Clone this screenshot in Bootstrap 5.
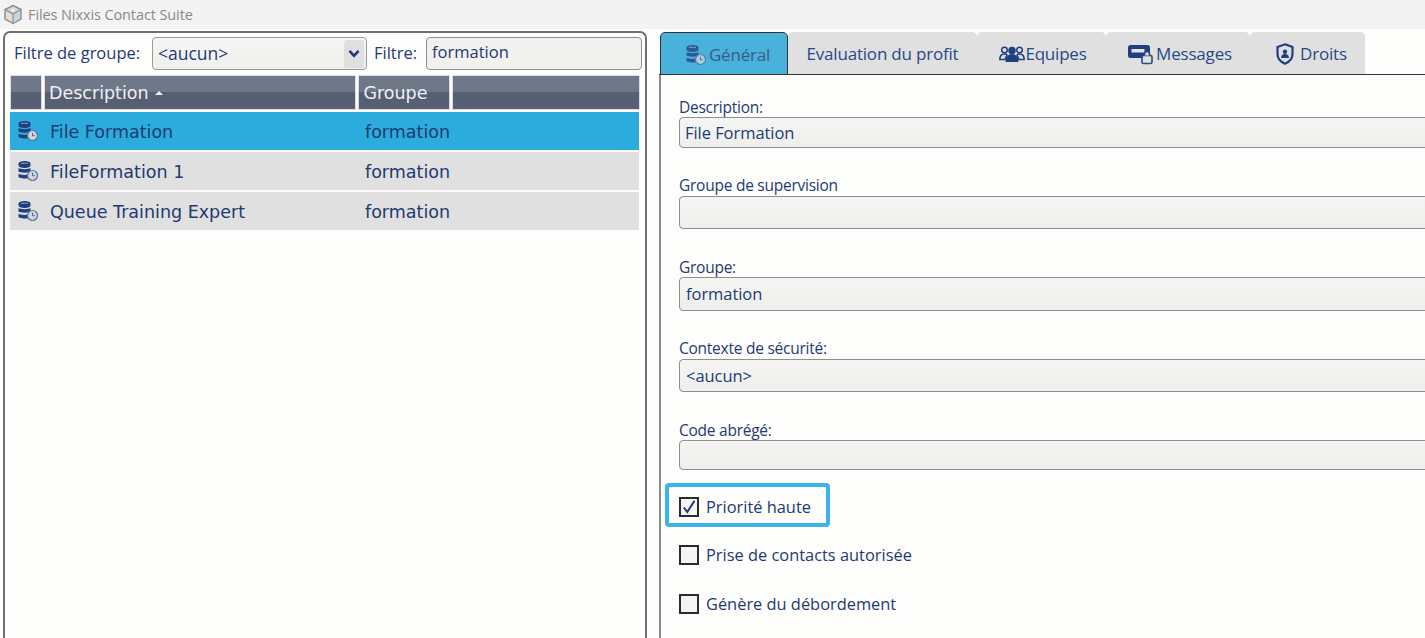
<!DOCTYPE html>
<html lang="fr">
<head>
<meta charset="utf-8">
<title>Files Nixxis Contact Suite</title>
<link href="https://cdn.jsdelivr.net/npm/bootstrap@5.3.0/dist/css/bootstrap.min.css" rel="stylesheet">
<style>
html,body{height:100%;overflow:hidden}
body{background:#fdfdfc;color:#1f3a73;font-family:"Open Sans","Noto Sans",sans-serif;font-size:15.5px;letter-spacing:-.25px;width:1425px;height:638px}
.titlebar{height:29px;background:#f3f3f3;color:#8a8a8a;font-size:14.5px;letter-spacing:-.1px;padding-left:3px;gap:5px}
.workarea{height:609px;gap:12px;padding:2px 0 0 3px}
.leftpane{width:644px;height:620px;border:2px solid #6f6f6f;border-bottom:0;border-radius:7px 7px 0 0;padding:4px 5px 0 5px;background:#fdfdfc;flex:none}
.filterbar{height:33px;margin-bottom:5px;font-size:16.5px;letter-spacing:0}
.flabel{padding-left:4px;width:142px;flex:none}
.flabel2{width:59px;flex:none;padding-left:7px}
.groupsel{width:215px;height:33px;border:1px solid #9a9a9a;border-radius:4px;background:linear-gradient(#f6f6f5,#efefee);padding-left:5px;flex:none;font-size:17.5px}
.selarrow{width:20px;height:28px;background:#dfdfdf;border-radius:3px;margin-right:2px}
.filterinput{width:216px;height:33px;border:1px solid #8f8f8f;border-radius:4px;background:#f1f1ef;padding:0 0 3px 5px;margin-left:0;flex:none;font-size:16.5px;letter-spacing:0}
.gridfont{font-family:"DejaVu Sans",sans-serif;letter-spacing:0;font-size:17.5px}
.gridhead{height:35px;margin-bottom:2px}
.hcell{background:linear-gradient(#6f7889 0,#6f7889 47%,#565f74 47%,#565f74 100%);color:#eef0f2;height:35px;border:1px solid #dcdcdc;margin-right:2px;padding-left:4px;padding-top:2px}
.hcell:last-child{margin-right:0}
.hc1{width:32px}.hc2{width:313px}.hc3{width:92px}.hc4{width:188px}
.sortcaret{width:0;height:0;border-left:4px solid transparent;border-right:4px solid transparent;border-bottom:4px solid #eef0f2;margin-left:6px;margin-top:-2px}
.gridrow{height:38px;margin-bottom:2px;width:629px;background:#e0e0e0;color:#1d3a72;padding-top:2px}
.gridrow.picked{background:#2bacdd}
.rc1{width:40px;padding-left:7px;flex:none;margin-top:-3px}
.rc2{width:315px;flex:none}
.rightpane{flex:1 1 auto;min-width:0;height:620px;overflow:hidden;padding-top:1px}
.tabstrip{height:43px;border-bottom:1px solid #333;padding-left:1px}
.tabitem{height:43px;background:#e0e0e0;border-radius:5px 5px 0 0;gap:3px;font-size:17px;letter-spacing:-.2px;color:#264a86;margin-bottom:-1px;border-bottom:1px solid #333;padding-top:2px}
.tabitem.active{background:#48b2da;border:1px solid #333;color:#3b5c8d}
.tw1{width:128px;gap:1px;padding-left:6px}.tw2{width:189px}.tw3{width:129px;gap:0;padding-left:3px}.tw4{width:144px;padding-left:4px}.tw5{width:115px;gap:6px;padding-left:8px}
.dimicon{opacity:.75}
.formpane{border-left:2px solid #8c8c8c;height:570px;padding:22px 0 0 18px}
.flabelrow{line-height:20px;height:20px;font-size:15.5px}
.finput{width:760px;border:1px solid #8f8f8f;border-radius:4px;background:linear-gradient(#f5f5f4,#eeeeed);padding:1px 0 0 6px;font-size:16.5px;letter-spacing:-.05px;color:#1f3a73}
.fh1{height:31px;margin-bottom:27px;margin-top:0;padding-left:5px}
.fh2{height:33px;margin-bottom:28px;margin-top:1px}
.fh3{height:34px;margin-bottom:27px;margin-top:0}
.fh4{height:33px;margin-bottom:28px;margin-top:1px}
.fh5{height:30px;margin-bottom:13px;margin-top:0}
.optrow{height:20px;gap:7px;font-size:16.4px;letter-spacing:0}
.optbox{width:20px;height:20px;border:2px solid #2b2b2b;background:#f4f4f4;flex:none}
.focusframe{width:165px;height:44px;border:4px solid #3db2ec;border-radius:4px;margin-left:-14px;padding-left:10px;padding-top:4px;margin-bottom:18px}
.optgap{margin-bottom:29px}
.optgap2{margin-bottom:0}
</style>
</head>
<body>
<svg width="0" height="0" class="d-block position-absolute">
  <defs>
    <symbol id="dbclock" viewBox="0 0 22 22">
      <path d="M1.500 3.500C1.500 2 4 1 7.500 1s6 1 6 2.500v2C13.500 7 11 8 7.500 8s-6-1-6-2.500z" fill="#1f3f80"/>
      <path d="M4 3.600c1-.6 6-.6 7 0" fill="none" stroke="#9fb0c8" stroke-width=".9"/>
      <path d="M1.500 8c1.500 1.500 10.500 1.500 12 0v3.500c-1.500 1.500-10.500 1.500-12 0z" fill="#1f3f80"/>
      <path d="M1.500 13.800c1.500 1.200 7 1.300 9.500.8v3.800c-3 .4-8 .1-9.500-1.300z" fill="#1f3f80"/>
      <circle cx="15.500" cy="15.500" r="5" fill="#cfd5de" stroke="#5c7397" stroke-width="1.200"/>
      <path d="M15.500 12.800v2.900h2.300" fill="none" stroke="#4e668d" stroke-width="1"/>
    </symbol>
  </defs>
</svg>

<div class="titlebar d-flex align-items-center">
  <svg width="20" height="21" viewBox="0 0 20 21" aria-hidden="true">
    <path d="M10 1.500 18 5.500v9.500l-8 4.500-8-4.500V5.500z" fill="#d5d8da" stroke="#8c8f92" stroke-width="1.400"/>
    <path d="M2 5.500l8 4.500 8-4.500M10 10v9.500" fill="none" stroke="#8c8f92" stroke-width="1.200"/>
    <path d="M3.200 7.500l5.800 3.300v6.500l-5.800-3.200z" fill="#efd9c8"/>
    <path d="M16.800 7.500 11 10.800v6.500l5.800-3.200z" fill="#bcd8ea"/>
    <circle cx="10" cy="6" r="1.800" fill="#f0f0f0"/>
  </svg>
  <span>Files Nixxis Contact Suite</span>
</div>

<div class="workarea d-flex">
  <section class="leftpane">
    <div class="filterbar d-flex align-items-center">
      <div class="flabel">Filtre de groupe:</div>
      <div class="groupsel d-flex align-items-center justify-content-between">
        <span>&lt;aucun&gt;</span>
        <span class="selarrow d-flex align-items-center justify-content-center">
          <svg width="12" height="9" viewBox="0 0 12 9" aria-hidden="true"><path d="M1.500 1.800 6 6.800l4.500-5" fill="none" stroke="#1d3a72" stroke-width="2.600"/></svg>
        </span>
      </div>
      <div class="flabel2">Filtre:</div>
      <div class="filterinput d-flex align-items-center">formation</div>
    </div>

    <div class="gridhead d-flex gridfont">
      <div class="hcell hc1"></div>
      <div class="hcell hc2 d-flex align-items-center">Description<span class="sortcaret"></span></div>
      <div class="hcell hc3 d-flex align-items-center">Groupe</div>
      <div class="hcell hc4"></div>
    </div>

    <div class="gridrow picked d-flex align-items-center gridfont">
      <div class="rc1 d-flex"><svg width="22" height="22" aria-hidden="true"><use href="#dbclock"/></svg></div>
      <div class="rc2">File Formation</div><div>formation</div>
    </div>
    <div class="gridrow d-flex align-items-center gridfont">
      <div class="rc1 d-flex"><svg width="22" height="22" aria-hidden="true"><use href="#dbclock"/></svg></div>
      <div class="rc2">FileFormation 1</div><div>formation</div>
    </div>
    <div class="gridrow d-flex align-items-center gridfont">
      <div class="rc1 d-flex"><svg width="22" height="22" aria-hidden="true"><use href="#dbclock"/></svg></div>
      <div class="rc2">Queue Training Expert</div><div>formation</div>
    </div>
  </section>

  <section class="rightpane">
    <div class="tabstrip d-flex">
      <div class="tabitem active tw1 d-flex align-items-center justify-content-center">
        <svg class="dimicon" width="24" height="22" aria-hidden="true"><use href="#dbclock"/></svg><span>Général</span>
      </div>
      <div class="tabitem tw2 d-flex align-items-center justify-content-center">Evaluation du profit</div>
      <div class="tabitem tw3 d-flex align-items-center justify-content-center">
        <svg width="26" height="17" viewBox="0 0 26 17" aria-hidden="true" fill="#1f3f80">
          <circle cx="5.500" cy="4" r="2.800" fill="none" stroke="#1f3f80" stroke-width="1.500"/>
          <circle cx="20.500" cy="4" r="2.800" fill="none" stroke="#1f3f80" stroke-width="1.500"/>
          <path d="M.8 13.500c0-3.500 2-5.500 4.700-5.500 1 0 2 .3 2.500 1l-2 4.500z" fill="none" stroke="#1f3f80" stroke-width="1.500"/>
          <path d="M25.200 13.500c0-3.500-2-5.500-4.700-5.500-1 0-2 .3-2.500 1l2 4.500z" fill="none" stroke="#1f3f80" stroke-width="1.500"/>
          <circle cx="13" cy="4.500" r="3.800"/>
          <path d="M6.500 16c0-5 2.500-8 6.500-8s6.500 3 6.500 8z"/>
        </svg>
        <span>Equipes</span>
      </div>
      <div class="tabitem tw4 d-flex align-items-center justify-content-center">
        <svg width="25" height="21" viewBox="0 0 25 21" aria-hidden="true">
          <rect x="0" y="1" width="22" height="13" rx="2.500" fill="#1f3f80"/>
          <rect x="3.500" y="5" width="13" height="3.500" fill="#dfe3ea"/>
          <rect x="14" y="11.500" width="10" height="8" rx="1.500" fill="#e0e0e0" stroke="#2a4a82" stroke-width="1.600"/>
          <path d="M16.500 11.500V10a2.500 2.500 0 0 1 5 0v1.500" fill="#e0e0e0" stroke="#2a4a82" stroke-width="1.600"/>
        </svg>
        <span>Messages</span>
      </div>
      <div class="tabitem tw5 d-flex align-items-center justify-content-center">
        <svg width="18" height="22" viewBox="0 0 18 22" aria-hidden="true">
          <path d="M9 1.300 16.500 4v7c0 4.500-3.300 8-7.500 9.700C4.800 19 1.500 15.500 1.500 11V4z" fill="#e0e0e0" stroke="#1f3f80" stroke-width="2.200"/>
          <circle cx="9" cy="8.800" r="2.200" fill="#1f3f80"/>
          <path d="M5 15c0-2.600 1.600-4 4-4s4 1.400 4 4z" fill="#1f3f80"/>
        </svg>
        <span>Droits</span>
      </div>
    </div>

    <div class="formpane">
      <div class="flabelrow">Description:</div>
      <div class="finput fh1 d-flex align-items-center">File Formation</div>
      <div class="flabelrow">Groupe de supervision</div>
      <div class="finput fh2"></div>
      <div class="flabelrow">Groupe:</div>
      <div class="finput fh3 d-flex align-items-center">formation</div>
      <div class="flabelrow">Contexte de sécurité:</div>
      <div class="finput fh4 d-flex align-items-center">&lt;aucun&gt;</div>
      <div class="flabelrow">Code abrégé:</div>
      <div class="finput fh5"></div>

      <div class="focusframe optrow d-flex align-items-center">
        <span class="optbox d-flex align-items-center justify-content-center">
          <svg width="16" height="16" viewBox="0 0 16 16" aria-hidden="true"><path d="M2.800 8.500 6.300 13 13.500 1.800" fill="none" stroke="#1f3a73" stroke-width="2"/></svg>
        </span>
        <span>Priorité haute</span>
      </div>
      <div class="optrow optgap d-flex align-items-center"><span class="optbox"></span><span>Prise de contacts autorisée</span></div>
      <div class="optrow optgap2 d-flex align-items-center"><span class="optbox"></span><span>Génère du débordement</span></div>
    </div>
  </section>
</div>
<script src="https://cdn.jsdelivr.net/npm/bootstrap@5.3.0/dist/js/bootstrap.bundle.min.js"></script>
</body>
</html>
